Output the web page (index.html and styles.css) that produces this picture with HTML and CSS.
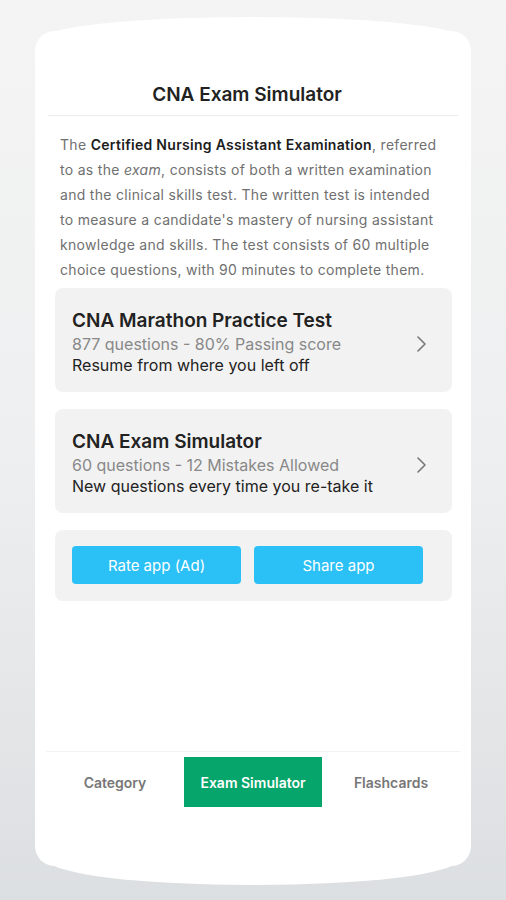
FILE: index.html
```html
<!DOCTYPE html>
<html lang="en">
<head>
    <meta charset="UTF-8">
    <meta name="viewport" content="width=device-width, initial-scale=1.0">
    <title>CNA Exam Simulator</title>
    <link rel="stylesheet" href="styles.css">
</head>
<body>
    <div class="frame">
        <div class="header">
            <h1>CNA Exam Simulator</h1>
        </div>
        <div class="content">
            <p class="intro">The <b>Certified Nursing Assistant Examination</b>, referred to as the <i>exam</i>, consists of both a written examination and the clinical skills test. The written test is intended to measure a candidate's mastery of nursing assistant knowledge and skills. The test consists of 60 multiple choice questions, with 90 minutes to complete them.</p>

            <div class="test-card">
                <div class="test-info">
                    <div class="test-title">CNA Marathon Practice Test</div>
                    <div class="test-meta">877 questions - 80% Passing score</div>
                    <div class="test-note">Resume from where you left off</div>
                </div>
                <svg class="chevron" width="12" height="18" viewBox="0 0 12 18"><polyline points="2,2 9,9 2,16" fill="none" stroke="#777" stroke-width="1.6" stroke-linecap="round" stroke-linejoin="round"/></svg>
            </div>

            <div class="test-card">
                <div class="test-info">
                    <div class="test-title">CNA Exam Simulator</div>
                    <div class="test-meta">60 questions - 12 Mistakes Allowed</div>
                    <div class="test-note">New questions every time you re-take it</div>
                </div>
                <svg class="chevron" width="12" height="18" viewBox="0 0 12 18"><polyline points="2,2 9,9 2,16" fill="none" stroke="#777" stroke-width="1.6" stroke-linecap="round" stroke-linejoin="round"/></svg>
            </div>

            <div class="actions">
                <button class="btn">Rate app (Ad)</button>
                <button class="btn">Share app</button>
            </div>
        </div>

        <div class="tabs">
            <div class="tab">Category</div>
            <div class="tab active">Exam Simulator</div>
            <div class="tab">Flashcards</div>
        </div>
    </div>
</body>
</html>
```

FILE: styles.css
```css
html, body {
    height: 100%;
}
body {
    margin: 0;
    font-family: Inter, Roboto, "Liberation Sans", sans-serif;
    background: linear-gradient(to bottom, #f4f4f4 0%, #eeeff0 50%, #dcdfe1 100%);
    overflow: hidden;
}

/* phone frame: rounded rect with a flat cap on top and bottom */
.frame {
    position: relative;
    width: 436px;
    height: 835px;
    margin: 31px 0 0 35px;
    background: #fff;
    border-radius: 20px;
    display: flex;
    flex-direction: column;
}
.frame::before,
.frame::after {
    content: "";
    position: absolute;
    background: #fff;
    border-radius: 50%;
}
.frame::before {
    left: 10px;
    right: 10px;
    top: -14px;
    height: 42px;
}
.frame::after {
    left: 14px;
    right: 14px;
    bottom: -19px;
    height: 50px;
}

.header {
    margin: 0 13px;
    padding: 52px 12px 8px 0;
    border-bottom: 1px solid #ececec;
    text-align: center;
}
h1 {
    margin: 0;
    font-size: 19px;
    line-height: 24px;
    font-weight: 600;
    color: #222;
}
.content {
    padding: 0 19px 0 20px;
}
.intro {
    margin: 16px 0 6px;
    padding: 0 10px 0 5px;
    font-size: 14px;
    line-height: 25px;
    color: #707070;
    letter-spacing: 0.3px;
}
.intro b {
    font-weight: 600;
    color: #1c1c1c;
}
.test-card {
    display: flex;
    align-items: center;
    background: #f2f2f2;
    border-radius: 8px;
    padding: 21px 24px 16px 17px;
    margin-bottom: 17px;
}
.test-info {
    flex: 1;
}
.test-title {
    font-size: 19px;
    line-height: 24px;
    font-weight: 600;
    color: #222;
}
.test-meta {
    font-size: 16px;
    line-height: 22px;
    color: #888;
}
.test-note {
    font-size: 16px;
    line-height: 21px;
    color: #222;
}
.chevron {
    margin-top: 2px;
}
.actions {
    display: flex;
    gap: 13px;
    background: #f2f2f2;
    border-radius: 8px;
    padding: 16px 17px 17px;
}
.btn {
    width: 169px;
    height: 38px;
    border: none;
    border-radius: 4px;
    background: #2bc0f6;
    color: #fff;
    font-family: Inter, Roboto, "Liberation Sans", sans-serif;
    font-size: 15px;
    cursor: pointer;
}
.tabs {
    margin: auto 11px 59px 11px;
    padding-top: 5px;
    border-top: 1px solid #f3f3f3;
    display: flex;
    justify-content: center;
}
.tab {
    width: 138px;
    height: 50px;
    display: flex;
    align-items: center;
    justify-content: center;
    font-size: 14px;
    font-weight: 600;
    color: #777;
}
.tab.active {
    background: #06a56b;
    color: #fff;
}
```
